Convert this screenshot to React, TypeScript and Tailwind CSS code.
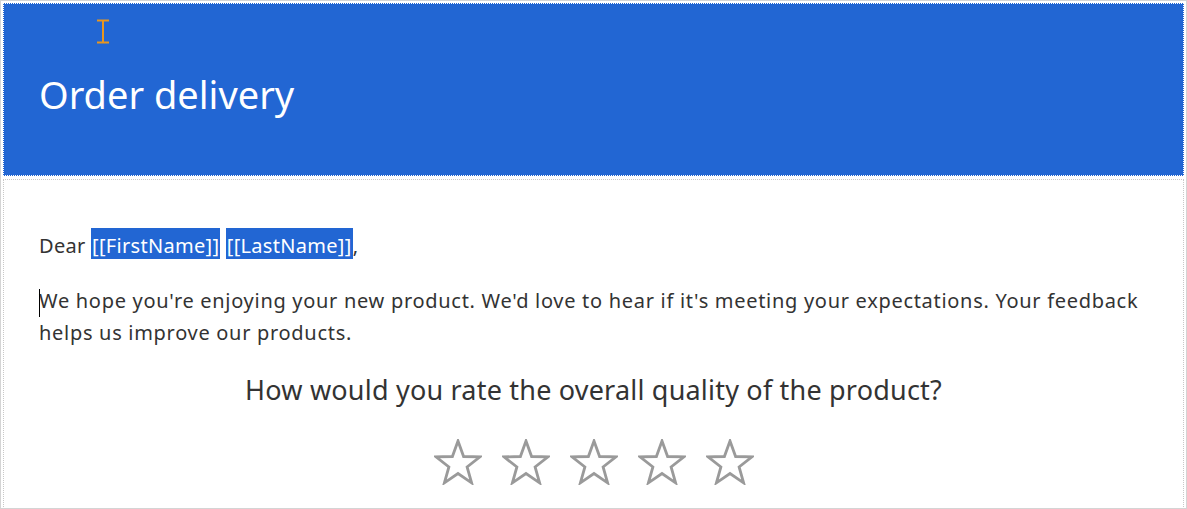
import React from "react";

function Star() {
  return (
    <svg width="48" height="46" viewBox="0 0 48 46" className="block">
      <polygon
        points="24,2 29.6,17.5 46,17.9 33.1,28 37.6,43.8 24,34.5 10.4,43.8 14.9,28 2,17.9 18.4,17.5"
        fill="none"
        stroke="#9a9a9a"
        strokeWidth="2.8"
        strokeLinejoin="miter"
      />
    </svg>
  );
}

export default function App() {
  return (
    <div
      className="relative w-[1187px] h-[509px] bg-white border border-[#d4d4d4] overflow-hidden"
      style={{ fontFamily: '"Segoe UI", "Noto Sans", "Open Sans", sans-serif' }}
    >
      <div className="p-[2px]">
        <div className="h-[173px] bg-[#2266d3] border border-dotted border-white flex items-center pl-[35px] pt-[8px]">
          <h1 className="text-[38px] leading-none text-white font-normal">Order delivery</h1>
        </div>
        <div className="mt-[3px] h-[330px] border border-dotted border-[#c8c8c8] pl-[35px] pr-[30px] pt-[51px] text-[#333333]">
          <p className="text-[20px] leading-[30px] tracking-[0.3px]">
            Dear{" "}
            <span className="bg-[#2266d3] text-white px-[1px] pt-[4px]">[[FirstName]]</span>{" "}
            <span className="bg-[#2266d3] text-white px-[1px] pt-[4px]">[[LastName]]</span>,
          </p>
          <p className="relative mt-[24px] text-[20px] leading-[32px] tracking-[0.7px]">
            <span className="absolute left-0 top-[4px] w-[1px] h-[28px] bg-black" />
            We hope you're enjoying your new product. We'd love to hear if it's meeting your expectations. Your feedback helps us improve our products.
          </p>
          <p className="mt-[23px] text-center text-[27px] leading-[36px] tracking-[0.2px] pr-[5px]">
            How would you rate the overall quality of the product?
          </p>
          <div className="mt-[31px] flex justify-center gap-[20px] pr-[5px]">
            <Star />
            <Star />
            <Star />
            <Star />
            <Star />
          </div>
        </div>
      </div>
      <svg className="absolute left-[95px] top-[18px]" width="14" height="26" viewBox="0 0 14 26">
        <path d="M1 1.5h12M7 1.5v22M1 23.5h12" stroke="#e8961e" strokeWidth="2" fill="none" />
      </svg>
    </div>
  );
}
